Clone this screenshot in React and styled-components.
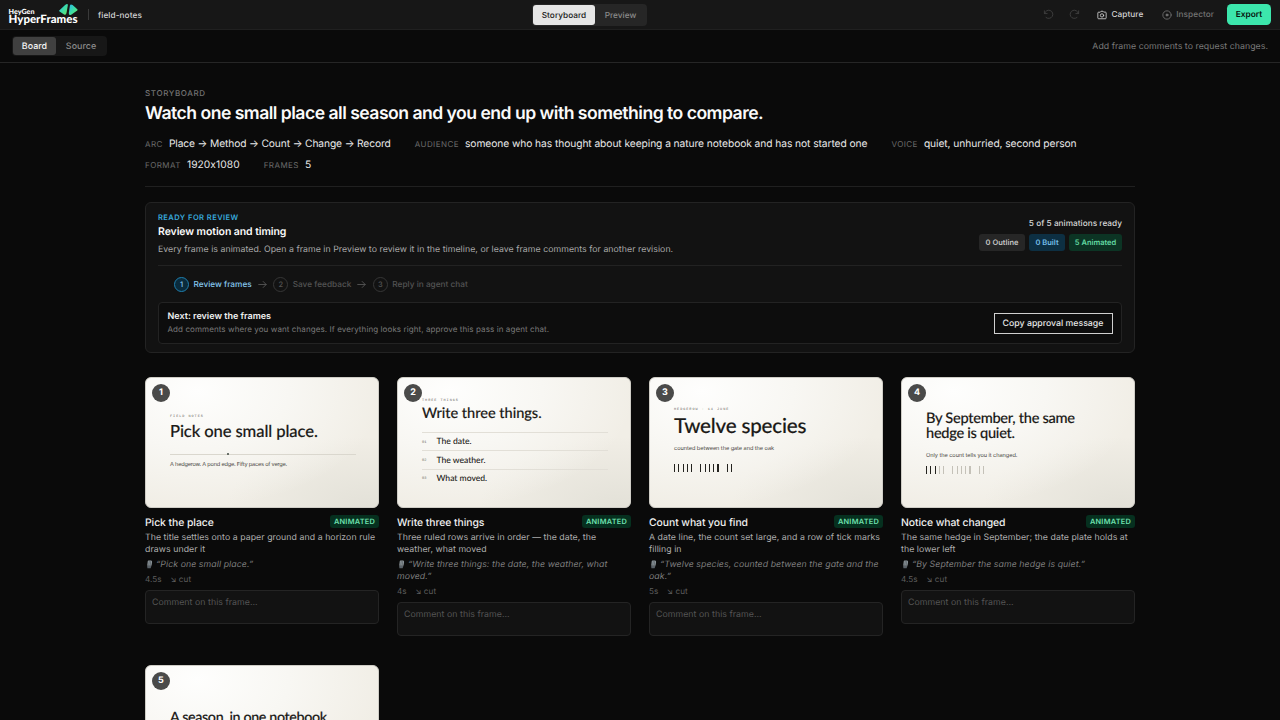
import React from "react";
import styled, { createGlobalStyle, css } from "styled-components";

const Global = createGlobalStyle`
  * { box-sizing: border-box; }
  html, body { margin: 0; height: 100%; overflow: hidden; background: #0a0a0a; }
  body {
    font-family: Inter, "Liberation Sans", sans-serif;
    font-feature-settings: "calt" 0;
    text-rendering: geometricPrecision;
    color: #e5e5e5;
    -webkit-font-smoothing: antialiased;
  }
  button { font: inherit; border: 0; padding: 0; background: none; text-rendering: inherit; }
`;

const type = (size, weight, line, spacing = 0) => css`
  font-size: ${size}px;
  font-weight: ${weight};
  line-height: ${line}px;
  letter-spacing: ${spacing}px;
`;

const Page = styled.div`
  width: 1280px;
  height: 720px;
  overflow: hidden;
  display: flex;
  flex-direction: column;
  background: #0a0a0a;
`;

const Header = styled.header`
  flex: none;
  height: 30px;
  display: flex;
  justify-content: space-between;
  align-items: center;
  padding: 0 9px 0 8px;
  background: #171717;
  border-bottom: 1px solid #202020;
`;

const Brand = styled.div`
  display: flex;
  align-items: center;
  width: 134px;
  svg { flex: none; }
`;

const Rule = styled.span`
  flex: none;
  width: 1px;
  height: 11px;
  margin: 0 9.5px 0 8.5px;
  background: #3a3a3a;
`;

const Project = styled.span`
  ${type(8.25, 500, 13, 0.08)}
  padding-top: 1px;
  white-space: nowrap;
  color: #d4d4d4;
`;

const Segment = styled.div`
  display: flex;
  align-items: stretch;
  height: ${(p) => (p.$sub ? 20 : 22)}px;
  padding: 1px;
  border-radius: 4px;
  background: ${(p) => (p.$sub ? "#171717" : "#262626")};
`;

const SegmentButton = styled.button`
  ${(p) => type(p.$size || 8.25, 500, 13, 0.04)}
  width: ${(p) => p.$w}px;
  padding-top: 1px;
  text-align: center;
  border-radius: 3px;
  color: ${(p) => p.$color};
  background: ${(p) => p.$bg || "transparent"};
`;

const Actions = styled.div`
  display: flex;
  align-items: center;
  justify-content: flex-end;
  width: 234px;
`;

const Action = styled.button`
  ${type(8.25, 500, 13, 0.05)}
  display: flex;
  align-items: center;
  gap: ${(p) => p.$gap || 0}px;
  margin-right: ${(p) => p.$mr}px;
  color: ${(p) => p.$color};
  svg { display: block; }
`;

const ExportButton = styled.button`
  ${type(8.4, 600, 13, 0)}
  width: 44px;
  height: 21px;
  padding-top: 1px;
  border-radius: 4.5px;
  color: #06120d;
  background: #3ce6ac;
`;

const SubBar = styled.div`
  flex: none;
  height: 33px;
  display: flex;
  align-items: center;
  justify-content: space-between;
  padding: 0 12px;
  border-bottom: 1px solid #262626;
`;

const Hint = styled.span`
  ${type(8.75, 400, 13, 0.05)}
  padding-top: 2px;
  color: #7a7a7a;
`;

const Content = styled.main`
  width: 990px;
  margin: 0 auto;
  padding-top: 24px;
  margin-left: 145px;
`;

const Eyebrow = styled.div`
  ${type(8, 500, 12, 0.62)}
  color: #737373;
`;

const Title = styled.h1`
  ${type(17.6, 600, 24, -0.52)}
  margin: 3px 0 0;
  color: #fafafa;
`;

const Meta = styled.dl`
  display: flex;
  flex-wrap: wrap;
  column-gap: 24px;
  row-gap: 6px;
  margin: 10.5px 0 0;
  padding-bottom: 13.5px;
  border-bottom: 1px solid #202020;
`;

const MetaItem = styled.div`
  display: flex;
  align-items: baseline;
  gap: ${(p) => p.$gap || 6}px;
  height: 15px;
  white-space: nowrap;
  dt { ${type(8, 400, 13, 0.45)} color: #6a6a6a; }
  dd { ${(p) => type(10.25, 400, 15, p.$spacing || -0.08)} margin: 0; color: #e8e8e8; }
`;

const Review = styled.section`
  margin-top: 15px;
  height: 151px;
  padding: 8.5px 12px 0;
  border: 1px solid #232323;
  border-radius: 6px;
  background: #121212;
`;

const ReviewTop = styled.div`
  display: flex;
  justify-content: space-between;
  height: 54.5px;
  border-bottom: 1px solid #222;
`;

const Status = styled.div`
  ${type(7.5, 600, 12, 0.46)}
  color: #38a9dc;
`;

const ReviewTitle = styled.h2`
  ${type(10.5, 600, 15, -0.08)}
  margin: 0.5px 0 0;
  color: #fafafa;
`;

const ReviewText = styled.p`
  ${type(8.75, 400, 13, 0.045)}
  margin: 5px 0 0;
  white-space: nowrap;
  color: #a8a8a8;
`;

const Progress = styled.div`
  display: flex;
  flex-direction: column;
  align-items: flex-end;
  padding-top: 5.5px;
`;

const ProgressText = styled.div`
  ${type(8.25, 500, 12, 0.02)}
  color: #d8d8d8;
`;

const Chips = styled.div`
  display: flex;
  gap: 4px;
  margin-top: 5px;
`;

const Chip = styled.span`
  ${type(7.5, 600, 17, 0)}
  width: ${(p) => p.$w}px;
  text-align: center;
  border-radius: 3px;
  white-space: nowrap;
  color: ${(p) => p.$color};
  background: ${(p) => p.$bg};
`;

const Steps = styled.div`
  display: flex;
  align-items: center;
  height: 36px;
  padding-left: 16px;
  svg { display: block; margin: 0 6.5px 0 6px; }
`;

const Step = styled.div`
  ${type(8.25, 500, 13, 0.01)}
  display: flex;
  align-items: center;
  gap: 4.5px;
  color: ${(p) => (p.$on ? "#86c8ee" : "#525252")};
`;

const StepNumber = styled.span`
  ${type(7.5, 500, 14, 0)}
  width: 15px;
  height: 15px;
  text-align: center;
  border-radius: 50%;
  border: 1px solid ${(p) => (p.$on ? "#1f7fae" : "#363636")};
  background: ${(p) => (p.$on ? "#0a2b3c" : "transparent")};
`;

const Next = styled.div`
  display: flex;
  align-items: center;
  justify-content: space-between;
  height: 42px;
  padding: 0 8.5px;
  border: 1px solid #232323;
  border-radius: 4px;
  background: #0d0d0d;
`;

const NextTitle = styled.div`
  ${type(9, 600, 13, 0)}
  color: #f0f0f0;
`;

const NextText = styled.div`
  ${type(8, 400, 13, 0.09)}
  color: #7a7a7a;
`;

const CopyButton = styled.button`
  ${type(8.75, 500, 13, 0)}
  width: 119px;
  height: 21px;
  padding-top: 2px;
  border: 1px solid #d0d0d0;
  color: #e5e5e5;
`;

const Board = styled.div`
  display: grid;
  grid-template-columns: repeat(4, 234px);
  column-gap: 18px;
  row-gap: 29px;
  margin-top: 24px;
  align-items: start;
`;

const Thumb = styled.div`
  position: relative;
  height: 131px;
  border-radius: 6px;
  border: 1px solid #cfcdc6;
  overflow: hidden;
  color: #1b1a17;
  font-family: Lato, Inter, sans-serif;
  background: radial-gradient(ellipse 80% 90% at 22% 10%, #fefefd 0%, #f8f7f3 50%, rgba(243, 240, 232, 0) 100%),
    radial-gradient(ellipse 60% 55% at 95% 100%, #e3e1d8 0%, rgba(239, 236, 228, 0) 100%), #f1eee6;
  padding: ${(p) => p.$top}px 22px 0 24px;
`;

const Badge = styled.span`
  ${type(9, 700, 18.5, 0)}
  position: absolute;
  left: 6px;
  top: 6px;
  width: 18px;
  height: 18px;
  border-radius: 50%;
  text-align: center;
  font-family: Inter, sans-serif;
  color: #fff;
  background: #4a4a49;
`;

const Overline = styled.div`
  ${type(3.5, 400, 6, 0.97)}
  font-family: "Liberation Mono", monospace;
  color: #66635c;
  white-space: pre;
`;

const Headline = styled.div`
  ${(p) => type(p.$size, 500, p.$line, p.$spacing)}
  margin-top: ${(p) => p.$mt || 0}px;
  white-space: pre;
  -webkit-text-stroke: 0.15px #1b1a17;
`;

const Caption = styled.div`
  ${type(5.6, 400, 8, 0)}
  font-family: Inter, sans-serif;
  letter-spacing: ${(p) => p.$spacing || 0}px;
  margin-top: ${(p) => p.$mt}px;
  color: #4a4843;
`;

const Horizon = styled.div`
  height: 1px;
  margin-top: 12.5px;
  background: #dad7ce;
  display: flex;
  align-items: center;
  padding-left: 57px;
  span { width: 2px; height: 2px; border-radius: 50%; background: #3f4a42; }
`;

const ThingList = styled.div`
  margin-top: 9px;
`;

const Thing = styled.div`
  ${type(8.6, 500, 17, -0.02)}
  display: flex;
  align-items: center;
  height: 18.4px;
  border-top: 1px solid #e2dfd7;
  small { width: 14.5px; font: 3.7px/8px "Liberation Mono", monospace; color: #6f6c65; padding-top: 2px; }
`;

const Ticks = styled.div`
  display: flex;
  gap: 8px;
  margin-top: ${(p) => p.$mt}px;
`;

const TickGroup = styled.div`
  display: flex;
  gap: 3.15px;
`;

const Tick = styled.i`
  width: 1.15px;
  height: 8px;
  background: ${(p) => (p.$faint ? "#c4c1b8" : "#24231f")};
`;

const NameRow = styled.div`
  display: flex;
  justify-content: space-between;
  align-items: center;
  height: 14px;
  margin-top: 6.5px;
`;

const Name = styled.h3`
  ${type(10.4, 500, 15, -0.06)}
  margin: 0;
  padding-top: 1px;
  color: #f0f0f0;
`;

const Tag = styled.span`
  ${type(7.4, 600, 13, 0.24)}
  width: 49px;
  text-align: center;
  border-radius: 3px;
  color: #6ee0ae;
  background: #06301f;
`;

const Description = styled.p`
  ${type(8.75, 400, 12, 0.06)}
  margin: 3.5px 0 0;
  color: #aeaeae;
  white-space: pre;
`;

const Quote = styled.p`
  ${type(8.75, 400, 12, 0.075)}
  margin: 3px 0 0;
  font-style: italic;
  color: #7e7e7e;
  white-space: pre;
  svg { display: inline-block; vertical-align: -2px; margin: 0 3px 0 1px; }
`;

const Timing = styled.div`
  ${type(8.1, 400, 12, 0.07)}
  display: flex;
  gap: 8.5px;
  margin-top: 1.5px;
  color: #5e5e5e;
`;

const CommentBox = styled.div`
  ${type(8.75, 400, 12, 0.05)}
  height: 34px;
  margin-top: 5.5px;
  padding: 5.5px 6px;
  border: 1px solid #242424;
  border-radius: 4px;
  color: #555;
  background: #121212;
`;

const Logo = () => (
  <svg width="71" height="24" viewBox="0 0 71 24">
    <defs>
      <linearGradient id="wing" x1="0" x2="1" y1="0" y2="1">
        <stop offset="0" stopColor="#28b8ea" />
        <stop offset="0.5" stopColor="#3cdca8" />
        <stop offset="1" stopColor="#6be85e" />
      </linearGradient>
    </defs>
    <text x="0.5" y="10.8" fontFamily="Lato" fontWeight="900" fontSize="7" fill="#fff" textLength="26" lengthAdjust="spacingAndGlyphs">HeyGen</text>
    <text x="0.5" y="20.4" fontFamily="Lato" fontWeight="900" fontSize="11.4" fill="#fff" textLength="69" lengthAdjust="spacingAndGlyphs">HyperFrames</text>
    <path d="M51.5 7.2 56.8 2.2Q60.2-.1 59.8 2.5L58.6 9.6Q58 13 55.7 11.2L51.6 8.6Q50.7 8 51.5 7.2Z" fill="url(#wing)" />
    <path d="M69.3 6.2 64.6 2.1Q62.4.5 61.9 2.8L60.8 10Q60.6 13 63.6 11.4L69.2 7.6Q70 6.9 69.3 6.2Z" fill="url(#wing)" />
  </svg>
);

const stroke = { fill: "none", stroke: "currentColor", strokeWidth: 2, strokeLinecap: "round", strokeLinejoin: "round" };

const UndoIcon = ({ flip }) => (
  <svg width="11" height="11" viewBox="0 0 24 24" {...stroke}>
    <g transform={flip ? "translate(24 0) scale(-1 1)" : undefined}>
      <path d="M3 4v6h6M3.5 10a9 9 0 1 1 3 8.5" />
    </g>
  </svg>
);

const CameraIcon = () => (
  <svg width="10" height="10" viewBox="0 0 24 24" {...stroke}>
    <path d="M8 5l1.5-2h5L16 5h4a2 2 0 0 1 2 2v12a2 2 0 0 1-2 2H4a2 2 0 0 1-2-2V7a2 2 0 0 1 2-2Z" />
    <circle cx="12" cy="13" r="4" />
  </svg>
);

const InspectorIcon = () => (
  <svg width="10" height="10" viewBox="0 0 24 24" {...stroke}>
    <circle cx="12" cy="12" r="10" />
    <circle cx="12" cy="12" r="2.5" fill="currentColor" />
  </svg>
);

const StepArrow = () => (
  <svg width="9" height="9" viewBox="0 0 9 9" fill="none" stroke="#565656" strokeWidth="0.9" strokeLinecap="round" strokeLinejoin="round">
    <path d="M.7 4.5h7.4M5.2 1.5l3 3-3 3" />
  </svg>
);

const MicIcon = () => (
  <svg width="7" height="9" viewBox="0 0 7 9">
    <path d="M2.5.5h2.6q1.2.1 1 1.4L5.5 5.8H1.2L1.7 1.6Q1.8.6 2.5.5Z" fill="#8e979c" />
    <path d="M3.3 1 2.7 5.4M4.8 1 4.2 5.4" stroke="#4d555b" strokeWidth=".6" />
    <path d="M1.1 6h4.3L4.6 8.2H1.4Z" fill="#596168" />
  </svg>
);

const TickMarks = ({ mt, counted }) => (
  <Ticks $mt={mt}>
    {[5, 5, 2].map((size, g) => (
      <TickGroup key={g}>
        {Array.from({ length: size }, (_, i) => (
          <Tick key={i} $faint={g * 5 + i >= counted} />
        ))}
      </TickGroup>
    ))}
  </Ticks>
);

const frames = [
  {
    name: "Pick the place",
    text: "The title settles onto a paper ground and a horizon rule\ndraws under it",
    quote: "“Pick one small place.”",
    time: "4.5s",
    top: 36,
    slide: (
      <>
        <Overline>FIELD NOTES</Overline>
        <Headline $size={16.6} $line={20} $spacing={-0.1} $mt={1}>Pick one small place.</Headline>
        <Horizon><span /></Horizon>
        <Caption $mt={6.5} $spacing={-0.2}>A hedgerow. A pond edge. Fifty paces of verge.</Caption>
      </>
    ),
  },
  {
    name: "Write three things",
    text: "Three ruled rows arrive in order — the date, the\nweather, what moved",
    quote: "“Write three things: the date, the weather, what\nmoved.”",
    time: "4s",
    top: 19.5,
    slide: (
      <>
        <Overline>THREE THINGS</Overline>
        <Headline $size={14.6} $line={18} $spacing={-0.04} $mt={1.5}>Write three things.</Headline>
        <ThingList>
          {["The date.", "The weather.", "What moved."].map((t, i) => (
            <Thing key={t}><small>{`0${i + 1}`}</small>{t}</Thing>
          ))}
        </ThingList>
      </>
    ),
  },
  {
    name: "Count what you find",
    text: "A date line, the count set large, and a row of tick marks\nfilling in",
    quote: "“Twelve species, counted between the gate and the\noak.”",
    time: "5s",
    top: 28.5,
    slide: (
      <>
        <Overline>HEDGEROW · 14 JUNE</Overline>
        <Headline $size={20.6} $line={24} $spacing={-0.2} $mt={1}>Twelve species</Headline>
        <Caption $mt={7.5} $spacing={-0.05}>counted between the gate and the oak</Caption>
        <TickMarks mt={10.5} counted={12} />
      </>
    ),
  },
  {
    name: "Notice what changed",
    text: "The same hedge in September; the date plate holds at\nthe lower left",
    quote: "“By September the same hedge is quiet.”",
    time: "4.5s",
    top: 33,
    slide: (
      <>
        <Headline $size={14.6} $line={15} $spacing={-0.28}>{"By September, the same\nhedge is quiet."}</Headline>
        <Caption $mt={11} $spacing={-0.05}>Only the count tells you it changed.</Caption>
        <TickMarks mt={6} counted={3} />
      </>
    ),
  },
  {
    name: "Keep the notebook",
    text: "",
    quote: "",
    time: "5s",
    top: 43,
    slide: <Headline $size={14.3} $line={17} $spacing={-0.36}>A season, in one notebook.</Headline>,
  },
];

const FrameCard = ({ frame, index }) => (
  <article>
    <Thumb $top={frame.top}>
      <Badge>{index + 1}</Badge>
      {frame.slide}
    </Thumb>
    {frame.text && (
      <>
        <NameRow>
          <Name>{frame.name}</Name>
          <Tag>ANIMATED</Tag>
        </NameRow>
        <Description>{frame.text}</Description>
        <Quote><MicIcon />{frame.quote}</Quote>
        <Timing><span>{frame.time}</span><span>↘ cut</span></Timing>
        <CommentBox>Comment on this frame…</CommentBox>
      </>
    )}
  </article>
);

const meta = [
  { label: "ARC", value: "Place → Method → Count → Change → Record", spacing: -0.13 },
  { label: "AUDIENCE", value: "someone who has thought about keeping a nature notebook and has not started one" },
  { label: "VOICE", value: "quiet, unhurried, second person" },
  { label: "FORMAT", value: "1920x1080", spacing: 0.05 },
  { label: "FRAMES", value: "5" },
];

export default function App() {
  return (
    <Page>
      <Global />
      <Header>
        <Brand>
          <Logo />
          <Rule />
          <Project>field-notes</Project>
        </Brand>
        <Segment>
          <SegmentButton $w={62} $color="#171717" $bg="#e5e5e5">Storyboard</SegmentButton>
          <SegmentButton $w={51} $color="#8a8a8a">Preview</SegmentButton>
        </Segment>
        <Actions>
          <Action $mr={15} $color="#404040"><UndoIcon /></Action>
          <Action $mr={17} $color="#404040"><UndoIcon flip /></Action>
          <Action $mr={19} $gap={4.5} $color="#d4d4d4"><CameraIcon />Capture</Action>
          <Action $mr={13} $gap={4} $color="#737373"><InspectorIcon />Inspector</Action>
          <ExportButton>Export</ExportButton>
        </Actions>
      </Header>
      <SubBar>
        <Segment $sub>
          <SegmentButton $size={8.9} $w={43} $color="#f5f5f5" $bg="#404040">Board</SegmentButton>
          <SegmentButton $size={8.9} $w={50} $color="#8a8a8a">Source</SegmentButton>
        </Segment>
        <Hint>Add frame comments to request changes.</Hint>
      </SubBar>
      <Content>
        <Eyebrow>STORYBOARD</Eyebrow>
        <Title>Watch one small place all season and you end up with something to compare.</Title>
        <Meta>
          {meta.map((m) => (
            <MetaItem key={m.label} $spacing={m.spacing}><dt>{m.label}</dt><dd>{m.value}</dd></MetaItem>
          ))}
        </Meta>
        <Review>
          <ReviewTop>
            <div>
              <Status>READY FOR REVIEW</Status>
              <ReviewTitle>Review motion and timing</ReviewTitle>
              <ReviewText>Every frame is animated. Open a frame in Preview to review it in the timeline, or leave frame comments for another revision.</ReviewText>
            </div>
            <Progress>
              <ProgressText>5 of 5 animations ready</ProgressText>
              <Chips>
                <Chip $w={46} $color="#c4c4c4" $bg="#262626">0 Outline</Chip>
                <Chip $w={36} $color="#74bde8" $bg="#0d2f42">0 Built</Chip>
                <Chip $w={53} $color="#62d8a2" $bg="#0c3424">5 Animated</Chip>
              </Chips>
            </Progress>
          </ReviewTop>
          <Steps>
            <Step $on><StepNumber $on>1</StepNumber>Review frames</Step>
            <StepArrow />
            <Step><StepNumber>2</StepNumber>Save feedback</Step>
            <StepArrow />
            <Step><StepNumber>3</StepNumber>Reply in agent chat</Step>
          </Steps>
          <Next>
            <div>
              <NextTitle>Next: review the frames</NextTitle>
              <NextText>Add comments where you want changes. If everything looks right, approve this pass in agent chat.</NextText>
            </div>
            <CopyButton>Copy approval message</CopyButton>
          </Next>
        </Review>
        <Board>
          {frames.map((f, i) => (
            <FrameCard key={f.name} frame={f} index={i} />
          ))}
        </Board>
      </Content>
    </Page>
  );
}
